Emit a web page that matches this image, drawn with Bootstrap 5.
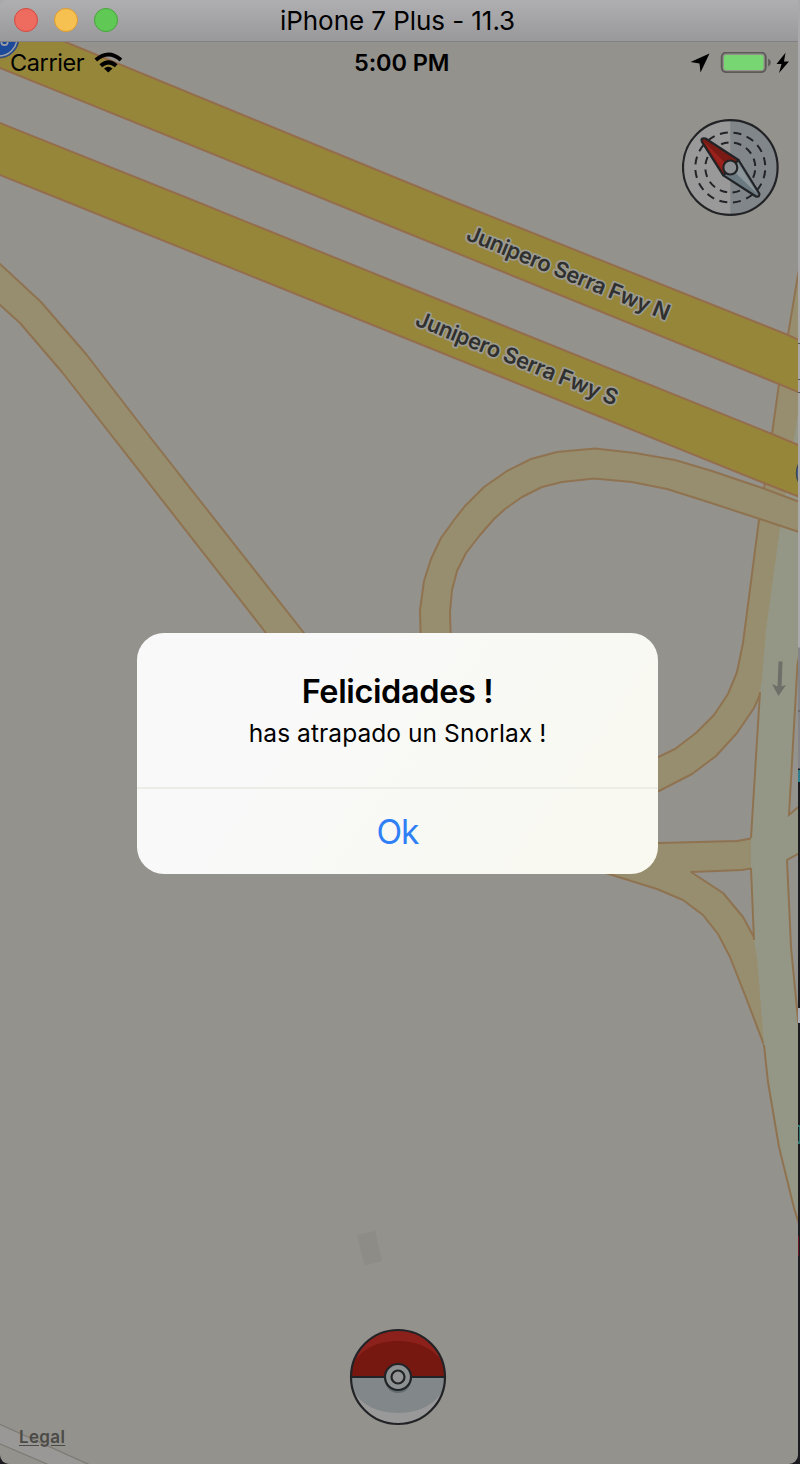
<!DOCTYPE html>
<html lang="es">
<head>
<meta charset="utf-8">
<meta name="viewport" content="width=device-width, initial-scale=1">
<title>iPhone 7 Plus - 11.3</title>
<link href="https://cdn.jsdelivr.net/npm/bootstrap@5.3.0/dist/css/bootstrap.min.css" rel="stylesheet">
<style>
body{font-family:Inter,"Liberation Sans",sans-serif;background:#1b1b20;color:#000;width:800px;height:1464px;overflow:hidden}
.desk{width:800px;height:1464px;background:linear-gradient(#a9a8aa 0 647px,#858589 648px 768px,#1b1b20 769px)}
.sim{width:798px;height:1464px;border-radius:7px 0 9px 9px;overflow:hidden}
.titlebar{height:42px;background:linear-gradient(#afaeb0,#99989a);border-bottom:1px solid #828183;padding:0 0 1px 14px;gap:16px}
.light{width:24px;height:24px;border-radius:50%;border:1px solid}
.light-r{background:#ee6b60;border-color:#d5493f}
.light-y{background:#f6c151;border-color:#dd9c30}
.light-g{background:#60c955;border-color:#45a638}
.wintitle{left:280px;top:2px;line-height:38px;font-size:26px;letter-spacing:-.06px;white-space:pre}
.screen{background:#94928d;height:1422px}
.status{height:41px;line-height:41px;font-size:23.5px}
.carrier{padding-left:10px;width:94px;letter-spacing:-.4px}
.clock{left:354px;top:0;font-weight:600;letter-spacing:-.1px}
.compass{margin:36px 18px 0 0}
.alertbox{width:521px;height:241px;border-radius:27px;left:137px;top:591px;background:linear-gradient(125deg,#f9f9fa 25%,#f8f9f3 65%,#f9f9f0);overflow:hidden}
.alertbox .body{height:156px;padding-top:39px;border-bottom:2px solid #ecede6}
.alertbox h1{font-size:32.5px;line-height:40px;font-weight:600;margin:0;letter-spacing:-.38px}
.alertbox p{font-size:24.5px;line-height:42px;margin:0;letter-spacing:.07px}
.okbtn{height:85px;font-size:33.5px;color:#2f7ff6;border:0;background:none;padding:1px 0 0;letter-spacing:-1px}
.legal{left:19px;top:1384px;font-size:17px;line-height:22px;font-weight:600;color:#4b4a47;letter-spacing:.35px;text-underline-offset:2px}
.ball{left:348px;top:1285px}
</style>
<script src="https://cdn.jsdelivr.net/npm/bootstrap@5.3.0/dist/js/bootstrap.bundle.min.js"></script>
</head>
<body>
<div class="desk position-relative">
<svg class="position-absolute top-0 end-0" width="2" height="1464"><path d="M0 343.500h2M0 379.500h2M0 392.500h2M0 711h2" stroke="#55545a"/><path fill="#2d7d8c" d="M0 770h2v12H0z"/><path fill="#a9adb8" d="M0 1008h2v15H0z"/><path fill="#2f7471" d="M0 1125h2v2H0zM1 1127h1v14H1zM0 1141h2v3H0z"/><path fill="#6a1322" d="M0 1236h1v20H0z"/></svg>
<div class="sim position-relative">
  <header class="titlebar d-flex align-items-center position-relative">
    <span class="light light-r"></span><span class="light light-y"></span><span class="light light-g"></span>
    <span class="wintitle position-absolute">iPhone 7 Plus - 11.3</span>
  </header>
  <main class="screen position-relative">
    <svg class="position-absolute top-0 start-0" width="798" height="1422" viewBox="0 42 798 1422">
      <g fill="#978e6f" stroke="#8f7350" stroke-width="2" stroke-linejoin="round">
        <path d="M-4 260L0 264L41 302L86 354L150 437L304 633L320 653H281L266 633L62 372L20 323L0 305L-4 302z"/>
        <path d="M805 240L798 275L788 335L779 384L772 434L764 489L759 520L743 643L737 672L728 694L714 715L696 733L675 749L600 785V815L659 791L692 774L716 756L737 733L754 708L762 690L810 690V240z"/>
        <path d="M600 844L659 843L737 841L754 838V868L742 870L691 872L723 893L743 917L756 941L790 960V1045H764L745 995L730 957L718 934L703 915L683 900L657 889L609 874L580 866z"/>
      </g>
      <path fill="#959786" d="M798 413L793 445L780 528L766 630L762 680L760 692L751 838V868L754 940L757 957L764 1045L768 1082L779 1147L794 1208L802 1230V400z"/>
      <path fill="none" stroke="#8f7350" stroke-width="2" d="M760 692L751 838M751 868L754 940M764 1045L768 1082L779 1147L794 1208L800 1227"/>
      <path fill="#94928d" stroke="#8f7350" stroke-width="2" d="M802 640L797.500 664L789 815L803 803zM803 851L787 860L791 947L798 1020L805 1060z"/>
      <path fill="#978e6f" stroke="#8f7350" stroke-width="2" stroke-linejoin="round" d="M421 650L420 610L424 581L431 559L441 538L454 520L465 506L484 487L507 471L531 459L557 452L595 448.500L635 453L675 460L712 471L765 489L805 504V534L763 520L705 501L667 489L632 482L594 478.500L562 482L542 487L522 497L505 509L494 519L480 535L466 553L457 571L452 590L450 612L451 650z"/>
      <g fill="#968639" stroke="#946d4d" stroke-width="2">
        <path d="M-40 0L63 41L260 122L450 200L788 335L810 345V397L779 384L400 230L260 173L0 68L-20 60z"/>
        <path d="M-10 119L190 199L400 284L772 434L810 450V501L764 483L400 336L60 199L-10 171z"/>
      </g>
      <ellipse cx="803" cy="473" rx="6.500" ry="12" fill="#46679b" stroke="#3d4758" stroke-width="1.500"/>
      <circle cx="-1" cy="38" r="20" fill="#1d4a98" stroke="#3b4d70"/><circle cx="-1" cy="38" r="18" fill="none" stroke="#9c9fa5" stroke-width="1.500"/>
      <circle cx="4.500" cy="42" r="3.200" fill="none" stroke="#9c9fa5" stroke-width="1.700"/>
      <g font-size="22" font-weight="600" fill="#30302f" stroke="#9c9b91" stroke-width="3.500" stroke-linejoin="round" paint-order="stroke">
        <text transform="translate(465 239.500) rotate(22)" textLength="217">Junipero Serra Fwy N</text>
        <text transform="translate(414 325) rotate(22)" textLength="216">Junipero Serra Fwy S</text>
      </g>
      <path d="M780.500 661.500L779.500 688" stroke="#6e6f68" stroke-width="4"/><path d="M772 684L779 687L786 685L778.500 696z" fill="#6e6f68"/>
      <path fill="#8e8c86" d="M357 1235L375 1231L382 1261L364.500 1265.500z"/>
      <path fill="#999896" stroke="#7e7a73" stroke-width="1.300" d="M-2 1423.500L90 1465V1480L47 1464L-2 1443z"/>
    </svg>
    <div class="status d-flex align-items-center position-relative">
      <span class="carrier">Carrier</span>
      <svg width="28" height="22" viewBox="94 50.500 28 22" fill="none" stroke="#000"><path stroke-width="4" d="M95.800 58.500Q108.500 47.500 121 58.500M100.800 64.200Q108.500 57.500 116.200 64.200"/><path fill="#000" stroke="none" d="M104 67Q108.300 63.700 112.500 67L108.300 71z"/></svg>
      <span class="clock position-absolute">5:00 PM</span>
      <svg class="ms-auto me-2" width="100" height="22" viewBox="690 51 100 22">
        <path d="M709.500 52.500L700.500 71.500L699.500 62.500L690.500 61z"/>
        <rect x="721.700" y="51.600" width="44" height="19.500" rx="4.500" fill="none" stroke="#5c5a57" stroke-width="1.900"/>
        <rect x="724" y="54" width="39.500" height="15" rx="2.500" fill="#77d672"/>
        <path fill="#5c5a57" d="M768.200 57.500q2.700 1.500 2.700 4t-2.700 4z"/>
        <path d="M785.500 51.700L776.500 63h5l-2.500 9L789 60.500h-5z"/>
      </svg>
    </div>
    <div class="d-flex justify-content-end position-relative">
      <svg class="compass" width="98" height="98" viewBox="682 119 98 98">
        <circle cx="730.300" cy="167.500" r="47.300" fill="#999"/>
        <path fill="#81868a" d="M730.300 120.200a47.300 47.300 0 0 1 0 94.600z"/>
        <g fill="none" stroke="#222326" stroke-width="2">
          <circle cx="730.300" cy="167.500" r="47.300" stroke-width="2.200"/>
          <circle cx="730.300" cy="167.500" r="35" stroke-dasharray="8 5.740" stroke-dashoffset="-3"/>
          <circle cx="730.300" cy="167.500" r="25" stroke-dasharray="7.500 5.590" stroke-dashoffset="-3"/>
        </g>
        <g stroke="#222326" stroke-width="2.200" stroke-linejoin="round">
          <path fill="#6a7a80" d="M738.500 160L759.300 193.500Q760 197.500 756 196.500L723.300 175.300z"/>
          <path fill="#8d979b" stroke="none" d="M737.500 162L757.500 194L730.500 168z"/>
          <path fill="#7a1a14" d="M738.500 160L723.300 175.300L702 142Q700 137.500 705.500 138.500z"/>
          <path fill="#9a211c" stroke="none" d="M730 168L724 173L703.500 141z"/>
          <circle cx="730.300" cy="167.500" r="7" fill="#8e9193"/>
        </g>
      </svg>
    </div>
    <section class="alertbox position-absolute text-center" role="alertdialog">
      <div class="body"><h1>Felicidades !</h1><p>has atrapado un Snorlax !</p></div>
      <button class="okbtn w-100" type="button">Ok</button>
    </section>
    <svg class="ball position-absolute" width="100" height="100" viewBox="348 1327 100 100">
      <clipPath id="disc"><circle cx="398" cy="1377" r="47"/></clipPath>
      <g clip-path="url(#disc)">
        <path fill="#8c211b" d="M348 1327h100v50H348z"/><path fill="#999" d="M348 1377h100v50H348z"/>
        <path fill="#761810" d="M350 1377C352 1329 444 1329 446 1377z"/>
        <path fill="#82878a" d="M350 1377C352 1425 444 1425 446 1377z"/>
      </g>
      <circle cx="398" cy="1380" r="13" fill="#626b6e"/>
      <g stroke="#222326" stroke-width="2.200"><path d="M351 1377h94"/><circle cx="398" cy="1377" r="47" fill="none"/><circle cx="398" cy="1377" r="13" fill="#8d9192"/><circle cx="398" cy="1377" r="6.500" fill="#929495"/></g>
    </svg>
    <a class="legal position-absolute text-decoration-underline">Legal</a>
  </main>
</div>
</div>
</body>
</html>
